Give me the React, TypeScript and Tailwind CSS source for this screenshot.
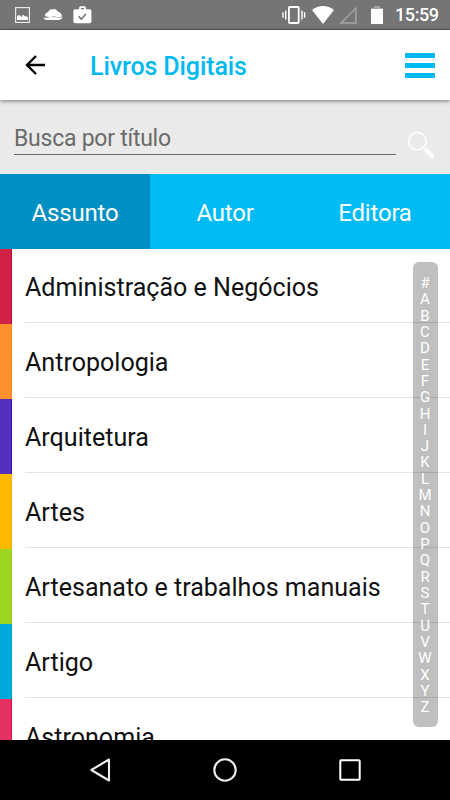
import React from 'react';

interface Subject {
  name: string;
  color: string;
}

const subjects: Subject[] = [
  { name: 'Administração e Negócios', color: 'bg-[#d12247] border-[#bd083a]' },
  { name: 'Antropologia', color: 'bg-[#ff902b] border-[#ff861f]' },
  { name: 'Arquitetura', color: 'bg-[#552fbd] border-[#3c0aae]' },
  { name: 'Artes', color: 'bg-[#ffb900] border-[#ffb000]' },
  { name: 'Artesanato e trabalhos manuais', color: 'bg-[#9fd522] border-[#96d010]' },
  { name: 'Artigo', color: 'bg-[#00a9dc] border-[#00a2da]' },
  { name: 'Astronomia', color: 'bg-[#e63262] border-[#dc0c4c]' },
];

const tabs = ['Assunto', 'Autor', 'Editora'];
const letters = '#ABCDEFGHIJKLMNOPQRSTUVWXYZ'.split('');

function StatusBar() {
  return (
    <div className="h-[30px] shrink-0 bg-[#757575] border-b border-[#5f5b5f] flex items-center justify-between pl-[15px] pr-[10px] text-white">
      <div className="flex items-center">
        <svg className="w-[15px] h-4" viewBox="0 0 15 16" fill="none">
          <rect x="0.6" y="0.6" width="13.8" height="14.8" stroke="#e8e8e8" strokeWidth="1.2" />
          <path d="M2 13V9.5L3.5 8L5 8.5L6.5 10L8 7.5L10 9.5L11.5 9L13 11V13Z" fill="currentColor" />
        </svg>
        <svg className="w-[20px] h-[13px] ml-[13px]" viewBox="0 0 20 13" fill="currentColor">
          <path d="M2 8C2 5 4 4.5 5.2 4C6.5 1.5 8 0.8 9.5 1.6C11.5 0.2 13.5 1.5 14.8 3.6C17.5 4.6 18.8 6 19 8.4C15 10 12.5 8.2 10 8.5C7 9.2 4.5 9.4 2 8Z" />
          <path d="M0.3 9.4C4 10.2 6.8 9.1 10 9.1C13 9.1 16 10.2 19.6 9.1C18.8 11.4 17.5 12 15 12H4.5C2.5 12 1 11.5 0.3 9.4Z" />
        </svg>
        <svg className="w-[19px] h-[18px] ml-[10px]" viewBox="0 0 19 18">
          <path d="M7 4V1.8Q7 1.2 7.6 1.2H11.4Q12 1.2 12 1.8V4" fill="none" stroke="currentColor" strokeWidth="1.8" />
          <rect x="0.4" y="3.3" width="18" height="14" rx="1.8" fill="currentColor" />
          <path d="M5.6 10.3L8.2 13L13 8" fill="none" stroke="#757575" strokeWidth="1.6" />
        </svg>
      </div>
      <div className="flex items-center">
        <svg className="w-6 h-[18px]" viewBox="0 0 24 18" fill="none" stroke="currentColor">
          <rect x="6.9" y="1" width="9.8" height="16" rx="0.8" strokeWidth="1.8" />
          <path d="M3.7 4.5V13.5M20 4.5V13.5" strokeWidth="1.4" />
          <path d="M1 6.2V11.8M22.6 6.2V11.8" strokeWidth="1.4" />
        </svg>
        <svg className="w-[22px] h-[18px] ml-[6px]" viewBox="0 0 22 18" fill="currentColor">
          <path d="M11 18L0 4Q5 0 11 0T22 4Z" />
        </svg>
        <svg className="w-[18px] h-[18px] ml-[5px]" viewBox="0 0 18 18" fill="none" stroke="#a5a5a5">
          <path d="M2 17L16.8 2.2V17Z" strokeWidth="1.5" />
        </svg>
        <svg className="w-3 h-[18px] ml-[14px]" viewBox="0 0 12 18">
          <path d="M3 0H9V2H12V4H0V2H3Z" fill="#a5a5a5" />
          <path d="M0 3H12V18H0Z" fill="currentColor" />
        </svg>
        <span className="ml-3 mt-px w-[45px] text-[18px] tracking-[-0.4px] leading-none font-medium whitespace-nowrap">15:59</span>
      </div>
    </div>
  );
}

function Header() {
  return (
    <header className="relative z-10 h-[70px] shrink-0 bg-white flex items-center pl-[25px] pr-[15px] shadow-[0_1px_4px_rgba(0,0,0,0.5)]">
      <svg className="w-5 h-5" viewBox="0 0 20 20" fill="none" stroke="#000" strokeWidth="2.4">
        <path d="M20 10H2M11 1L2 10L11 19" />
      </svg>
      <h1 className="ml-[45px] pt-[2px] text-[25px] tracking-[-0.1px] leading-none font-medium text-[#00b9f2]">Livros Digitais</h1>
      <div className="ml-auto flex flex-col gap-[5px]">
        <span className="w-[30px] h-[5px] bg-[#00b9f2]" />
        <span className="w-[30px] h-[5px] bg-[#00b9f2]" />
        <span className="w-[30px] h-[5px] bg-[#00b9f2]" />
      </div>
    </header>
  );
}

function SearchBar() {
  return (
    <div className="h-[74px] shrink-0 bg-[#eaeaea] flex items-start pl-[14px] pr-[14px]">
      <div className="w-[382px] h-[55px] pt-[26px] border-b border-[#6a6a6a] text-[23px] tracking-[-0.25px] leading-[26px] text-[#6b6b6b]">
        Busca por título
      </div>
      <svg className="w-7 h-7 ml-[11px] mt-[31px]" viewBox="0 0 28 28" fill="none" stroke="#fbfbfb">
        <circle cx="10.3" cy="10.3" r="8.8" strokeWidth="2" />
        <path d="M16.3 16.3L20 20" strokeWidth="2.2" />
        <path d="M20 20L25 25" strokeWidth="5" strokeLinecap="round" />
      </svg>
    </div>
  );
}

export default function App() {
  return (
    <div className="w-[450px] h-[800px] flex flex-col overflow-hidden bg-white font-[Roboto,sans-serif]">
      <StatusBar />
      <Header />
      <SearchBar />

      <nav className="h-[75px] shrink-0 grid grid-cols-3 text-white text-[24px] tracking-[-0.2px]">
        {tabs.map((tab) => (
          <button
            key={tab}
            className={`pt-[2px] ${tab === 'Assunto' ? 'bg-[#008fc2]' : 'bg-[#00bbf4]'}`}
          >
            {tab}
          </button>
        ))}
      </nav>

      <main className="relative flex-1 min-h-0 overflow-hidden">
        <ul>
          {subjects.map((subject) => (
            <li key={subject.name} className="h-[75px] flex">
              <div className={`w-[12px] border-r ${subject.color}`} />
              <div className="ml-[13px] flex-1 h-[74px] border-b border-[#e2e2e2] flex items-center pt-[5px] text-[25.07px] text-[#111]">
                {subject.name}
              </div>
            </li>
          ))}
        </ul>

        {/* alphabet index floats over the list */}
        <div className="absolute top-[13px] right-[12.5px] w-[25px] h-[465px] rounded-[6px] bg-black/25 flex flex-col items-center pt-[13px] text-white text-[15px] leading-[16.32px]">
          {letters.map((letter) => (
            <span key={letter}>{letter}</span>
          ))}
        </div>
      </main>

      <footer className="h-[60px] shrink-0 bg-black flex items-center pl-[89px] text-[#eee]">
        <svg className="w-[22px] h-6" viewBox="0 0 22 24" fill="none" stroke="currentColor">
          <path d="M2.3 12L20 1.5V22.5Z" strokeWidth="2.1" strokeLinejoin="round" />
        </svg>
        <svg className="w-6 h-6 ml-[102px]" viewBox="0 0 24 24" fill="none" stroke="currentColor">
          <circle cx="12" cy="12" r="10.7" strokeWidth="2.1" />
        </svg>
        <svg className="w-[22px] h-[22px] ml-[102px]" viewBox="0 0 22 22" fill="none" stroke="#fff">
          <rect x="1.3" y="1.3" width="19.4" height="19.4" rx="0.8" strokeWidth="2" />
        </svg>
      </footer>
    </div>
  );
}
